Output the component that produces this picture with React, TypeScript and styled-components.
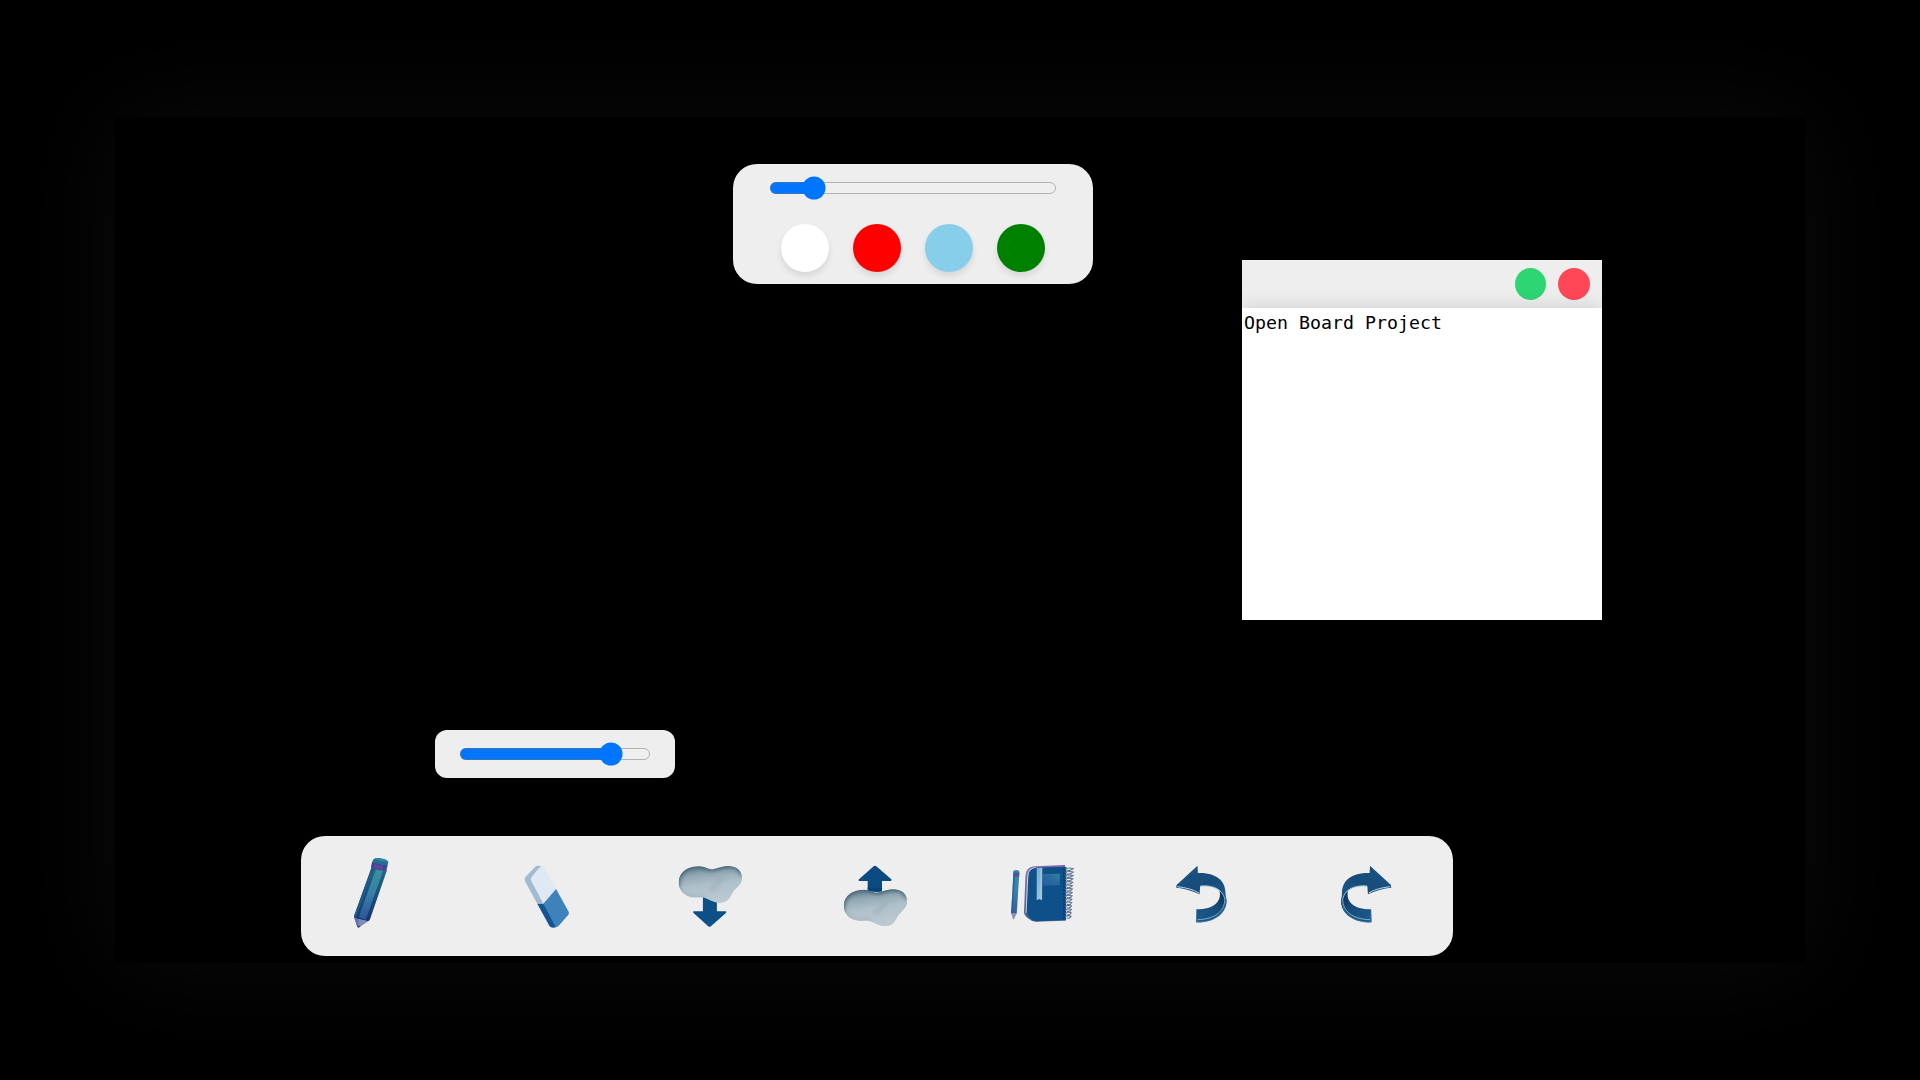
import React from "react";
import styled, { createGlobalStyle } from "styled-components";

const GlobalStyle = createGlobalStyle`
  *, *::before, *::after { box-sizing: border-box; }
  body { margin: 0; background: #000; overflow: hidden; }
`;

const Stage = styled.main`
  display: flex;
  align-items: center;
  justify-content: center;
  width: 1920px;
  height: 1080px;
  background: #000;
`;

const Board = styled.section`
  position: relative;
  width: 1690px;
  height: 846px;
  background: #000;
  box-shadow: 0 0 100px rgb(12, 12, 12);
`;

const Floating = styled.div<{ $x: number; $y: number }>`
  position: absolute;
  left: ${(p) => p.$x}px;
  top: ${(p) => p.$y}px;
`;

const PenPanel = styled(Floating)`
  display: flex;
  flex-direction: column;
  align-items: center;
  gap: 24px;
  width: 360px;
  height: 120px;
  padding-top: 12px;
  border-radius: 24px;
  background: #eee;
`;

const EraserPanel = styled(Floating)`
  display: flex;
  align-items: center;
  justify-content: center;
  width: 240px;
  height: 48px;
  border-radius: 12px;
  background: #eee;
`;

const Range = styled.input.attrs({ type: "range" })<{ $w: number }>`
  zoom: 1.5;
  width: ${(p) => p.$w}px;
  height: 16px;
  margin: 0;
  accent-color: #0075ff;
`;

const Swatches = styled.div`
  display: flex;
  gap: 24px;
`;

const Swatch = styled.button<{ $color: string }>`
  width: 48px;
  height: 48px;
  padding: 0;
  border: 0;
  border-radius: 50%;
  background: ${(p) => p.$color};
  box-shadow: 0 4px 6px rgba(0, 0, 0, 0.1);
`;

const Note = styled(Floating)`
  display: flex;
  flex-direction: column;
  width: 360px;
  height: 360px;
  overflow: hidden;
  background: #fff;
`;

const NoteBar = styled.header`
  display: flex;
  align-items: center;
  justify-content: flex-end;
  gap: 12px;
  height: 48px;
  padding: 0 12px;
  background: #eee;
`;

const Dot = styled.button<{ $color: string; $w: number }>`
  width: ${(p) => p.$w}px;
  height: 32px;
  padding: 0;
  border: 0;
  border-radius: 50%;
  background: ${(p) => p.$color};
`;

const NoteText = styled.div`
  flex: 1;
  padding: 3px 2px;
  background: #fff;
  box-shadow: 0 5px 22px rgba(0, 0, 0, 0.24);
  color: #000;
  font: 18.27px/24px "DejaVu Sans Mono", monospace;
  white-space: pre;
`;

const Toolbar = styled(Floating)`
  display: grid;
  grid-template-columns: repeat(7, 1fr);
  place-items: center;
  width: 1152px;
  height: 120px;
  border-radius: 24px;
  background: #eee;
`;

const Glyph = styled.svg`
  display: block;
  width: 80px;
  height: 80px;
`;

const Pencil = () => (
  <Glyph viewBox="160 93 240 240">
    <defs>
      <linearGradient id="pen" x1="0" y1="0" x2="0" y2="1">
        <stop offset="0" stopColor="#3a8fa3" />
        <stop offset=".5" stopColor="#377fa6" />
        <stop offset="1" stopColor="#2c5499" />
      </linearGradient>
      <linearGradient id="penSide" x1="0" y1="0" x2="0" y2="1">
        <stop offset="0" stopColor="#236a80" />
        <stop offset="1" stopColor="#153574" />
      </linearGradient>
    </defs>
    <path d="M246 125 L193 273 Q192 279 198 281 L234 289 Q239 289 241 283 L292 135Z" fill="url(#penSide)" />
    <path d="M260 130 L207 277 L228 284 L281 136Z" fill="url(#pen)" />
    <path d="M247 127 L193 275 L199 278 L253 131Z" fill="#215a88" />
    <path d="M194 279 L236 289 L210 306 Q203 311 202 303Z" fill="#7b8fb8" />
    <path d="M194 279 L208 282 L206 305 L202 304Z" fill="#5d77aa" />
    <path d="M202 301 L213 303 L208 308 Q203 310 202 301Z" fill="#62466f" />
    <path d="M247 111 L244 126 Q262 138 290 136 L294 121Z" fill="#403f92" />
    <path d="M253 116 L251 130 Q265 136 279 136 L282 122Z" fill="#554a9b" />
    <path d="M252 102 Q257 98 269 99 Q293 102 296 111 L293 123 Q266 119 247 112Z" fill="#266c92" />
    <path d="M255 102 Q270 97 293 109 Q277 111 255 102Z" fill="#328d9f" />
  </Glyph>
);

const Eraser = () => (
  <Glyph viewBox="653.7 93 240 240">
    <path d="M735 126 L705 157 Q702 162 705 169 L743 239 L760 235 L724 158 L752 124Z" fill="#a0bbd1" />
    <path d="M752 123 Q760 121 764 128 L798 192 L760 236 L723 167 Q721 161 725 156Z" fill="#dfe9f4" />
    <path d="M735 126 Q741 121 752 123 L748 130Z" fill="#a0bbd1" />
    <path d="M798 192 L836 261 Q838 266 834 270 L806 302 Q801 307 792 307 L759 237Z" fill="#3e82bb" />
    <path d="M742 237 L760 236 L797 307 Q783 310 778 303Z" fill="#145495" />
  </Glyph>
);

const cloudPath =
  "M117 127 C118 94 147 78 180 79 C199 80 207 90 222 87 C240 83 250 77 271 78 C293 80 308 94 308 115 C308 136 287 145 279 160 C270 180 260 189 242 189 C222 189 209 178 193 173 C174 171 157 177 138 165 C124 156 117 142 117 127Z";

const CloudDefs = ({ id }: { id: string }) => (
  <defs>
    <linearGradient id={`${id}a`} x1=".35" y1="0" x2=".6" y2="1">
      <stop offset="0" stopColor="#66828f" />
      <stop offset=".22" stopColor="#92a7b3" />
      <stop offset=".5" stopColor="#afc0ca" />
      <stop offset="1" stopColor="#bccad3" />
    </linearGradient>
    <filter id={`${id}s`} x="-20%" y="-20%" width="140%" height="140%">
      <feGaussianBlur stdDeviation="6" />
    </filter>
    <clipPath id={`${id}k`}>
      <path d={cloudPath} />
    </clipPath>
  </defs>
);

const CloudBody = ({ id }: { id: string }) => (
  <g clipPath={`url(#${id}k)`}>
    <path d={cloudPath} fill={`url(#${id}a)`} />
    <g filter={`url(#${id}s)`} fill="none">
      <path d="M114 150 C108 100 140 76 180 77 C199 78 207 88 222 86 C240 81 250 76 271 76 C290 78 305 88 308 104" stroke="#365668" strokeWidth="11" />
      <path d="M212 150 Q232 132 250 112" stroke="#98abb7" strokeWidth="8" />
      <path d="M118 140 Q124 164 150 172 Q180 176 196 170" stroke="#8fa4b1" strokeWidth="6" />
    </g>
  </g>
);

const Download = () => (
  <Glyph viewBox="97.3 48 240 240">
    <CloudDefs id="down" />
    <path d="M190 168 L232 184 V214 H258 Q263 215 259 219 L214 259 Q210 262 206 259 L162 219 Q158 215 163 214 H190Z" fill="#0d5088" />
    <CloudBody id="down" />
  </Glyph>
);

const Upload = () => (
  <Glyph viewBox="591 48 240 240">
    <CloudDefs id="up" />
    <g transform="translate(494 70)">
      <CloudBody id="up" />
    </g>
    <path d="M683 151 V123 H658 Q653 122 657 118 L701 79 Q705 76 709 79 L754 118 Q757 122 752 123 H726 V154 Q706 159 683 151Z" fill="#0b4b82" />
    <path d="M683 143 H726 V154 Q706 159 683 151Z" fill="#073b69" opacity=".6" />
  </Glyph>
);

const coils = Array.from({ length: 15 }, (_, i) => 86 + i * 10.2);

const Notebook = () => (
  <Glyph viewBox="64.8 48 240 240">
    <defs>
      <linearGradient id="stick" x1="0" y1="0" x2="0" y2="1">
        <stop offset="0" stopColor="#328aa1" />
        <stop offset=".45" stopColor="#3783ac" />
        <stop offset="1" stopColor="#345ba1" />
      </linearGradient>
      <linearGradient id="label" x1="1" y1="0" x2="0" y2="1">
        <stop offset="0" stopColor="#2d8499" />
        <stop offset=".5" stopColor="#286a9f" />
        <stop offset="1" stopColor="#245da0" />
      </linearGradient>
      <linearGradient id="ribbon" x1="0" y1="0" x2="0" y2="1">
        <stop offset="0" stopColor="#78afd0" />
        <stop offset="1" stopColor="#97c3df" />
      </linearGradient>
      <linearGradient id="spine" x1="1" y1="0" x2="0" y2="1">
        <stop offset="0" stopColor="#795caf" />
        <stop offset=".5" stopColor="#877fae" />
        <stop offset="1" stopColor="#3a5b87" />
      </linearGradient>
    </defs>
    <path d="M99 94 Q100 90 108 90 Q116 90 117 95 L109 221 H92Z" fill="url(#stick)" />
    <path d="M99 108 L92 221 H97 L104 108Z" fill="#285686" opacity=".6" />
    <path d="M99 97 L117 98 L116 111 L98 110Z" fill="#5155a1" />
    <path d="M92 219 L109 220 L101 237 Q98 240 97 235Z" fill="#8593b9" />
    <path d="M254 75 L160 79 Q136 82 135 108 L131 218 Q132 225 139 232 L155 243 L166 245 L256 242Z" fill="url(#spine)" />
    <path d="M257 81 L167 83 Q145 84 144 107 L139 220 L157 239 L257 239Z" fill="#1a4d82" />
    <path d="M166 83 Q143 84 142 110 L137 219" fill="none" stroke="#c4cee0" strokeWidth="3" />
    <path d="M258 81 L170 83 Q148 86 147 108 L144 222 Q144 233 156 240 L167 244 L257 241Z" fill="#0e5089" />
    <path d="M187 102 L239 101 L237 135 L187 138Z" fill="url(#label)" />
    <path d="M169 83 L186 83 L185 181 L177 177 L169 181Z" fill="url(#ribbon)" />
    <path d="M182 84 V178" stroke="#abd0e5" strokeWidth="3" />
    {coils.map((y) => (
      <g key={y} fill="none">
        <path d={`M249 ${y + 3} h5`} stroke="#092d54" strokeWidth="5" />
        <path d={`M253 ${y + 3} Q261 ${y - 5} ${279 - (y - 86) * 0.05} ${y} Q269 ${y + 8} 260 ${y + 5}`} stroke="#5d7292" strokeWidth="3.3" />
      </g>
    ))}
  </Glyph>
);

const TurnArrow = ({ id }: { id: string }) => (
  <>
    <defs>
      <linearGradient id={`${id}top`} x1="0" y1="0" x2="1" y2="1">
        <stop offset="0" stopColor="#1b5485" />
        <stop offset=".55" stopColor="#174c79" />
        <stop offset="1" stopColor="#1c5b91" />
      </linearGradient>
      <linearGradient id={`${id}in`} x1="1" y1="0" x2="0" y2="1">
        <stop offset="0" stopColor="#0b2d50" />
        <stop offset=".45" stopColor="#164c7b" />
        <stop offset="1" stopColor="#1d5b90" />
      </linearGradient>
    </defs>
    <path d="M719 152 C726 184 703 208 650 208 L648 247 C702 250 743 221 740 178 L735 166Z" fill={`url(#${id}in)`} />
    <path d="M653 77 L654 99 C706 98 737 119 737 160 L739 188 C733 154 709 134 661 138 L659 163 C638 152 612 145 589 143 L590 135Z" fill={`url(#${id}top)`} />
    <path d="M592 140 Q632 144 657 159" fill="none" stroke="#b4d6e6" strokeWidth="3" />
    <path d="M662 138 C703 134 728 150 735 177" fill="none" stroke="#8db9d2" strokeWidth="3" />
    <path d="M735 176 C735 215 704 238 653 239" fill="none" stroke="#8ebbd5" strokeWidth="2.6" />
    <path d="M650 209 V246 C697 248 737 225 738 178" fill="none" stroke="#5288ad" strokeWidth="2" />
  </>
);

const Undo = () => (
  <Glyph viewBox="558.4 48 240 240">
    <TurnArrow id="undo" />
  </Glyph>
);

const Redo = () => (
  <Glyph viewBox="92.1 93 240 240">
    <g transform="translate(862 45) scale(-1 1)">
      <TurnArrow id="redo" />
    </g>
  </Glyph>
);

const tools = [Pencil, Eraser, Download, Upload, Notebook, Undo, Redo];
const colors = ["white", "red", "skyblue", "green"];

export default function App() {
  return (
    <>
      <GlobalStyle />
      <Stage>
        <Board>
          <PenPanel $x={618} $y={47}>
            <Range $w={192} min={0} max={1000} defaultValue={125} />
            <Swatches>
              {colors.map((c) => (
                <Swatch key={c} $color={c} />
              ))}
            </Swatches>
          </PenPanel>
          <Note $x={1127} $y={143}>
            <NoteBar>
              <Dot $color="#2ed573" $w={31} />
              <Dot $color="#ff4757" $w={32} />
            </NoteBar>
            <NoteText>Open Board Project</NoteText>
          </Note>
          <EraserPanel $x={320} $y={613}>
            <Range $w={128} min={0} max={1000} defaultValue={833} />
          </EraserPanel>
          <Toolbar $x={186} $y={719}>
            {tools.map((Tool, i) => (
              <Tool key={i} />
            ))}
          </Toolbar>
        </Board>
      </Stage>
    </>
  );
}
